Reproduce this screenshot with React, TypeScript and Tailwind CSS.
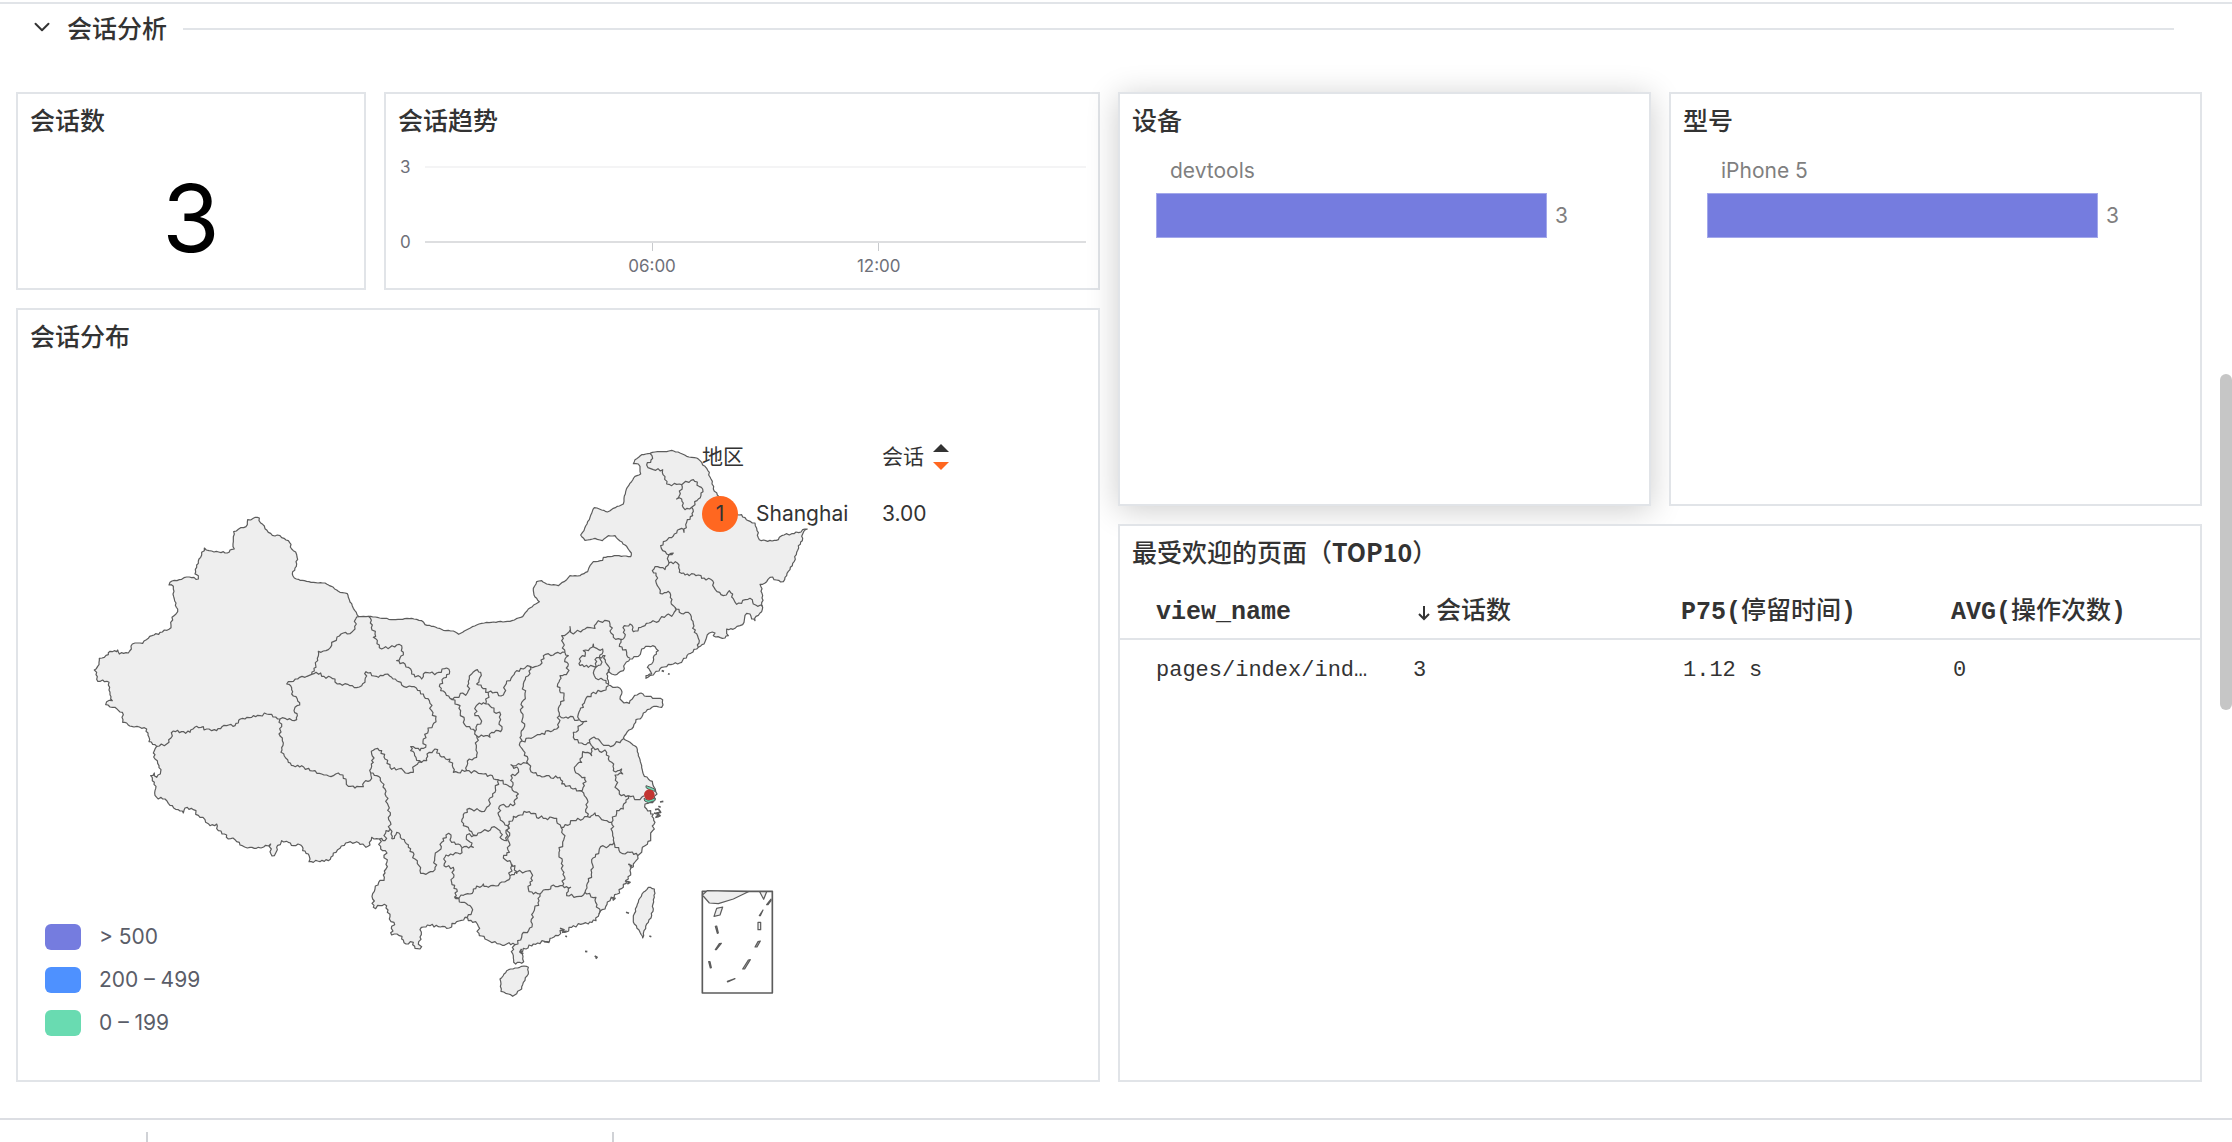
import React from "react";
import { ChevronDown } from "lucide-react";

type Point = [number, number];
type Sheet = "west" | "centre" | "north" | "inset";
type Line = { sheet: Sheet; rough: number; points: string };

/* The map is digitised on four sheets; each has its own origin. */
const ORIGINS: Record<Sheet, Point> = {
  west: [0, 0],
  centre: [840, 210],
  north: [1440, -210],
  inset: [1320, 450],
};

const OUTLINE: Line[] = [
  {
    sheet: "west",
    rough: 3,
    points:
      "290,772 267,758 260,720 245,718 215,712 200,702 188,700 187,670 165,655 137,647 140,638 157,635 150,610 147,580 128,573 113,577 110,550 103,543 113,532 118,508 145,497 150,487 170,488 173,483 178,495 205,492 217,465 248,463 265,448 300,430 333,416 336,385 348,375 353,360 343,330 340,292 327,288 330,280 365,271 388,264 415,270 415,260 405,255 410,235 422,205 433,177 455,186 490,188 502,192 510,183 523,180 520,150 521,128 535,121 558,113 563,92 580,88 598,87 602,102 625,130 645,141 660,140 685,155 695,180 710,197 709,232 698,248 703,267",
  },
  { sheet: "west", rough: 1, points: "703,267 720,274 760,280 795,282 820,295 840,310 862,314 865,325 880,358 896,383 925,382" },
  {
    sheet: "centre",
    rough: 1,
    points:
      "85,172 160,182 215,178 245,185 255,197 280,202 310,214 340,216 356,226 385,210 410,198 440,190 510,187 548,173 565,150 598,128 582,108 580,88 590,68 605,65 620,75 655,80 680,62 690,50 720,50 743,38 750,20 760,8 788,4",
  },
  {
    sheet: "north",
    rough: 1,
    points:
      "190,415 230,410 272,413 274,402 260,382 240,366 225,350 205,350 187,365 165,358 135,364 122,348 132,335 150,295 163,266 185,273 202,279 220,268 250,255 252,238 262,205 285,172 302,165 300,142 295,135 280,134 285,122 305,107 330,103 345,99 372,98 395,94 420,102 440,112 470,117 485,130",
  },
  {
    sheet: "north",
    rough: 3,
    points:
      "485,130 500,148 513,180 520,210 532,228 545,260 570,280 605,287 625,305 645,312 650,328 658,362 690,364 715,362 725,350 755,344 802,330 788,345 787,365 775,380 770,400 757,440 740,470 730,488 690,475 680,488 660,496 668,530 668,565 660,582 648,592 645,605 635,600 630,585 620,583 612,610 600,620 585,628 560,630 565,650 555,657 520,650 525,642 508,642 495,668 475,685 445,705 425,730 400,735 365,745 340,768 318,778 318,770 335,765 330,755 322,745 335,735 340,715 355,695 345,683 325,682 305,690 295,712 270,720 255,735 250,755 235,762 225,768 215,765 205,752 200,765 205,785 205,798 225,805 240,808 245,825 240,840 252,852 268,853 280,835 303,822 320,832 345,838 368,842 365,865 350,862 330,870 310,882 305,895 288,902 275,930 258,945 250,958",
  },
  { sheet: "north", rough: 1, points: "250,958 270,970 290,985" },
  { sheet: "centre", rough: 1, points: "890,565 895,590 905,620 910,645" },
  {
    sheet: "centre",
    rough: 5,
    points:
      "910,645 925,660 938,675 946,690 946,720 930,730 915,735 920,750 940,765 945,790 938,815 932,845 915,860 905,880 893,890 880,915 870,935 865,960 850,985 832,1005 810,1025 795,1050 777,1065 768,1085 745,1095 700,1100 672,1120 660,1115 655,1130 620,1148 580,1155 550,1168 540,1180 548,1200 545,1213 527,1215 520,1190 517,1165 525,1157 500,1155 480,1155 465,1148 435,1140 418,1130 412,1095 385,1085 375,1075 350,1088 320,1108 295,1103 270,1100 240,1112 240,1170 225,1168 220,1150 205,1155 185,1140 178,1130 155,1128 162,1090 148,1080 140,1040 100,1045 98,1020 105,990 133,955 138,930 136,875 122,870 118,840",
  },
  {
    sheet: "west",
    rough: 4,
    points:
      "958,1050 935,1045 930,1068 918,1075 890,1058 865,1060 840,1078 820,1092 805,1115 780,1118 747,1118 745,1095 728,1085 722,1068 700,1070 685,1060 665,1055 650,1075 643,1100 633,1095 632,1065 595,1075 570,1075 540,1068 525,1052 505,1050 500,1038 475,1025 470,1005 450,1010 435,992 420,985 400,962 375,957 370,972 355,962 325,943 315,930 290,925 285,905 283,880 272,860 283,852 290,865 301,855 297,830 285,810 283,785 290,772",
  },
];

const WEST_BORDERS = [
  "290,772 320,765 340,726 365,728 390,730 410,712 430,713 432,723 470,725 500,710 525,710 548,688 580,680 620,675 660,690",
  "660,690 675,688 710,692 712,680 702,665 705,655 719,648 712,630 695,615 692,590 680,585 685,578 755,556",
  "755,556 768,535 775,487 805,482 815,460 850,432 862,435 885,420 887,390 896,383",
  "660,690 657,700 665,705 657,735 667,755 663,790 685,820 700,830 725,830 750,845 800,858 820,860 835,852 858,870 865,892 885,897 910,893 912,880 930,875 932,852",
  "755,556 782,552 785,562 825,570 832,585 870,590 890,596 905,590 915,573 918,548 955,565 975,556 995,565 1010,575",
];

const CENTRE_BORDERS = [
  "170,365 185,378 215,383 250,405 268,425 275,455 287,480 265,515 250,540 257,565 240,575 212,563 212,575 228,595 245,610 225,620 220,640 205,643 190,635 175,630 150,625 135,600 125,575 105,570 95,585 100,610 92,642",
  "92,642 110,650 125,670 135,705 145,740 150,810 155,840",
  "150,810 138,815 135,845 118,840",
  "155,840 170,820 185,840 205,865 225,900 240,935 250,943 285,932 285,890 303,870 305,850 318,828 333,828 335,850 365,865",
  "85,172 105,225 100,235 125,270 150,265 185,260 190,280 170,305 205,325 215,345 245,360 250,345 290,342 320,327 328,345 300,375 302,395 330,418",
  "330,418 360,440 370,490 405,518 408,505 422,495 420,478 405,470 412,437 437,435",
  "330,418 382,402 388,360 405,335 422,340 410,375 425,385 445,400 437,435",
  "437,435 482,467 482,518 455,520 450,535 410,530",
  "405,518 410,530 410,595 388,600 380,635",
  "445,400 490,408 495,380 525,340 550,330 570,322",
  "570,322 565,350 550,375 555,410 545,430 550,510 540,550",
  "570,322 600,318 610,290 640,288 675,280",
  "675,280 665,245 665,230 680,225 690,203 700,225 735,210 765,208 775,185 800,185 810,195 820,235 850,240",
  "850,240 853,200 870,195 880,218 915,200 960,180 1000,165 1005,145",
  "850,240 838,262 860,280 870,298",
  "675,280 685,290 675,300 685,315 683,340 660,350 653,375 672,410 655,455 658,470",
  "540,550 600,527 650,510 658,470",
  "658,470 718,482",
  "805,380 790,395 760,400 735,425 730,445 715,465 718,482",
  "718,482 740,487 700,520 700,535 725,552 750,552",
  "750,552 755,538 775,540 785,553 820,560 850,540",
  "720,320 718,300 735,292 730,275 750,268 760,255 770,268 788,270 778,295 782,318 760,322 745,325 720,320",
  "778,295 795,290 800,315 806,335",
  "805,375 798,365 775,362 763,350 768,320 765,302 778,295",
  "750,552 760,565 800,580 815,610 820,635 845,630 848,645 825,648 833,670 825,685 838,705 865,710",
  "865,710 900,722 912,710",
  "760,565 755,590 728,578 720,600 725,610 703,625 715,645 735,655 733,680 718,695",
  "718,695 690,680 665,675 660,655 600,650 570,630 565,615",
  "540,550 550,575 565,615",
  "565,615 513,617 535,630 530,645 513,650 515,685",
  "380,635 430,645 475,662 515,685",
  "380,635 340,640 330,600 300,590 285,570 268,580 260,605 245,610",
  "475,662 465,700 440,745 425,758 388,748 370,775 370,800 395,818 410,830",
  "515,685 535,705 525,735 478,742 480,775 503,800",
  "410,830 455,805 480,815 485,840 500,845 505,800",
  "410,830 380,828 385,845 400,865 365,868",
  "365,868 360,885 318,888 312,920 340,925 335,970 350,990 343,1015",
  "343,1015 390,1005 400,990 430,975 445,985 475,980 500,965 510,950",
  "503,800 508,880 490,897 510,905 515,920 510,950",
  "515,915 525,920 530,945",
  "510,950 525,940 570,935 577,965 565,990 580,1005 600,1005",
  "600,1005 597,1025 580,1060 577,1095 545,1135 525,1157",
  "600,1005 605,1000 632,990 640,978 668,980",
  "668,980 672,940 657,880 675,830 663,805",
  "503,800 520,772 560,760 610,778 650,778 663,805",
  "663,805 700,785 742,773",
  "718,695 738,715 742,773",
  "742,773 765,762 780,775 815,790",
  "815,790 830,755 850,750 865,710",
  "815,790 822,850",
  "822,850 840,880 870,880 893,890",
  "822,850 778,870 755,910 755,940 735,1000",
  "668,980 692,985 680,1010 725,1012 735,1000",
  "735,1000 768,1015 777,1065",
  "343,1015 390,1040 395,1060 375,1075",
];

const NORTH_BORDERS = [
  "330,103 338,118 320,138 340,152 368,152 380,195 425,197 460,182 488,210 475,240 455,265 435,272 425,240 410,240 418,230 425,197",
  "455,265 458,290 440,310 432,340 425,328 362,380 380,405 400,402 385,412 387,432",
  "387,432 412,432 418,460 435,468 475,468 485,478 518,485 522,505 550,530 568,515 590,556 630,538 640,555 668,562",
  "387,432 375,452 345,443 337,455 348,462 352,500 360,523 385,517 400,560 405,565",
  "405,565 430,585 445,580 460,615 463,640 478,665 475,685",
];

const ISLANDS = [
  "545,1222 565,1225 565,1245 550,1270 545,1290 518,1312 483,1297 480,1260 500,1235 545,1222",
  "925,985 943,990 943,1015 935,1070 920,1095 908,1137 900,1120 883,1095 880,1070 895,1030 910,1000 925,985",
];

const ISLETS = [
  "858,1060 867,1063",
  "928,1131 934,1133",
  "735,1177 742,1178",
  "764,1191 771,1195 767,1199",
  "676,1131 681,1133",
  "965,335 972,337",
  "984,344 989,346",
  "960,729 970,727",
  "955,742 962,745",
  "945,752 955,750 962,760 950,762 960,770 948,775 955,765 942,762",
  "545,1170 540,1178 550,1184",
  "660,1108 672,1112 668,1120 680,1116",
  "865,915 875,920 870,925",
  "855,965 870,970 862,975",
  "812,1015 825,1018 818,1024",
  "612,1148 628,1150",
];

function parse(points: string): Point[] {
  return points.split(" ").map((pair) => pair.split(",").map(Number) as Point);
}

/* Splits long segments and nudges the new points sideways, as a surveyed border runs. */
function trace({ sheet, rough, points }: Line): Point[] {
  const [ox, oy] = ORIGINS[sheet];
  const base = parse(points).map(([x, y]): Point => [x + ox, y + oy]);
  const result: Point[] = [base[0]];
  for (let i = 1; i < base.length; i++) {
    const [ax, ay] = base[i - 1];
    const [bx, by] = base[i];
    const length = Math.hypot(bx - ax, by - ay) || 1;
    const steps = Math.max(1, Math.round(length / 7));
    for (let s = 1; s < steps; s++) {
      const t = s / steps;
      const wave = Math.sin((ax + bx) * 12.9 + (ay + by) * 78.2 + s * 37.7 + s * s * 1.7) * rough;
      result.push([
        Math.round(ax + (bx - ax) * t - ((by - ay) / length) * wave),
        Math.round(ay + (by - ay) * t + ((bx - ax) / length) * wave),
      ]);
    }
    result.push([bx, by]);
  }
  return result;
}

const toPath = (points: Point[]) => "M" + points.map((p) => p.join(" ")).join("L");

const outlinePath = toPath(OUTLINE.flatMap(trace)) + "Z";
const borderPath = [
  ...WEST_BORDERS.map((points) => toPath(trace({ sheet: "west", rough: 4, points }))),
  ...CENTRE_BORDERS.map((points) => toPath(trace({ sheet: "centre", rough: 5, points }))),
  ...NORTH_BORDERS.map((points) => toPath(trace({ sheet: "north", rough: 4, points }))),
].join("");
const islandPath = ISLANDS.map((points) => toPath(trace({ sheet: "centre", rough: 2, points })) + "Z").join("");
const isletPath = ISLETS.map((points) => toPath(trace({ sheet: "centre", rough: 0, points }))).join("");

function ChinaMap() {
  return (
    <svg
      className="mt-[91px] ml-[72px] h-[555px] w-[720px] shrink-0"
      viewBox="90 -135 2160 1665"
      fill="#eeeeee"
      stroke="#5c5c5c"
      strokeWidth="3.6"
      strokeLinejoin="round"
      role="img"
      aria-label="会话分布"
    >
      <path d={outlinePath} />
      <path d={borderPath} fill="none" />
      <path d={islandPath} />
      <path d={isletPath} fill="none" strokeWidth="5" />
      <g transform="translate(840 210)">
        <path
          d="M918 680L930 684L944 690L945 697L930 693L918 686ZM912 718L925 724L945 717L945 725L925 731L914 726Z"
          fill="#69dbb1"
          strokeWidth="3"
        />
        <circle cx="928" cy="707" r="16" fill="#c23531" stroke="none" />
      </g>
      <g transform="translate(1320 450)">
        <rect x="607" y="757" width="210" height="305" fill="none" strokeWidth="5" />
        <path d="M607 768L622 755L745 758L700 780L655 794L628 792Z" />
        <path d="M779 758L791 781L800 758Z" />
        <path d="M650 808L668 804L660 828L642 832Z" />
        <path d="M774 850H782V872H774Z" />
        <path
          d="M813 780L800 797L804 797L813 785ZM789 813L778 830L781 830ZM646 862L650 861L655 882L652 883ZM664 913L658 914L646 932L649 932ZM781 906L774 908L765 924L771 924ZM751 962L745 963L728 990L734 990ZM626 968L630 968L634 986L631 987ZM705 1019L682 1027L683 1029Z"
          fill="#aaaaaa"
        />
      </g>
    </svg>
  );
}

function Card({
  title,
  className = "",
  children,
}: {
  title: React.ReactNode;
  className?: string;
  children: React.ReactNode;
}) {
  return (
    <section className={`flex flex-col border-2 border-[#e1e4e8] bg-white ${className}`}>
      <h3 className="px-3 pt-[7px] text-[25px] leading-9 font-medium">{title}</h3>
      {children}
    </section>
  );
}

function TrendChart() {
  return (
    <div className="mt-[19px] flex pr-3 pl-3.5 font-[Inter,'Liberation_Sans',sans-serif] text-[17px] leading-[22px] text-[#6e7079]">
      <div className="flex w-[25px] flex-col justify-between pb-6">
        <span>3</span>
        <span>0</span>
      </div>
      <div className="flex flex-1 flex-col pt-2.5">
        <div className="h-[77px] border-t-2 border-b-2 border-t-[#f4f4f5] border-b-[#dddee0]" />
        <div className="flex">
          <div className="w-[17.2%]" />
          {["06:00", "12:00"].map((label) => (
            <div key={label} className="flex w-[34.3%] flex-col items-center">
              <span className="h-2 w-px bg-[#c8cacd]" />
              <span className="mt-1">{label}</span>
            </div>
          ))}
        </div>
      </div>
    </div>
  );
}

function BarCard({ title, name, value, className = "" }: { title: string; name: string; value: number; className?: string }) {
  return (
    <Card title={title} className={className}>
      <div className="mt-5 pl-9 font-[Inter,'Liberation_Sans',sans-serif] text-[21px] leading-7 text-[#7f7f7f]">
        <div className="pl-3.5">{name}</div>
        <div className="mt-2 flex items-center gap-2">
          <div className="h-[45px] w-[79.3%] border border-[#a3a8ea] bg-[#757cdf]" />
          <span>{value}</span>
        </div>
      </div>
    </Card>
  );
}

const LEGEND = [
  { label: "> 500", swatch: "bg-[#757cdf]" },
  { label: "200 – 499", swatch: "bg-[#4e91ff]" },
  { label: "0 – 199", swatch: "bg-[#69dbb1]" },
];

function DistributionCard() {
  return (
    <Card title="会话分布" className="relative h-[774px]">
      <ChinaMap />
      <table className="absolute top-[124px] left-[684px] text-left font-[Inter,'Noto_Sans_CJK_SC',sans-serif] text-[21px] text-[#333333]">
        <thead>
          <tr className="h-[46px]">
            <th className="w-[180px] p-0 font-normal">地区</th>
            <th className="p-0 font-normal">
              <button type="button" className="flex items-center gap-[9px]">
                会话
                <svg className="h-[26px] w-4" viewBox="0 0 16 26" aria-hidden="true">
                  <path d="M8 0L16 8H0Z" fill="#333333" />
                  <path d="M0 18H16L8 26Z" fill="#ff6720" />
                </svg>
              </button>
            </th>
          </tr>
        </thead>
        <tbody>
          <tr className="h-[68px]">
            <td className="p-0">
              <span className="flex items-center gap-[18px]">
                <span className="flex size-9 items-center justify-center rounded-full bg-[#ff6720]">1</span>
                Shanghai
              </span>
            </td>
            <td className="p-0">3.00</td>
          </tr>
        </tbody>
      </table>
      <ul className="absolute bottom-11 left-[27px] flex flex-col gap-[17px] font-[Inter,'Liberation_Sans',sans-serif] text-[21px] leading-[26px] text-[#5a5d68]">
        {LEGEND.map(({ label, swatch }) => (
          <li key={label} className="flex items-center gap-[18px]">
            <span className={`h-[26px] w-9 rounded-md ${swatch}`} />
            {label}
          </li>
        ))}
      </ul>
    </Card>
  );
}

function PagesTable() {
  return (
    <table className="mt-2 w-full table-fixed border-collapse text-left font-['Liberation_Mono','Noto_Sans_CJK_SC',monospace]">
      <thead>
        <tr className="h-[62px] border-b-2 border-[#e1e4e8] text-[25px]">
          <th className="pt-2.5 pr-5 pb-0 pl-9 font-bold">view_name</th>
          <th className="px-5 pt-2.5 pb-0 font-medium">
            <button type="button" className="flex items-center gap-1.5 pl-2">
              <svg className="h-4 w-3" viewBox="0 0 12 16" fill="none" stroke="#333333" strokeWidth="2" aria-hidden="true">
                <path d="M6 1V14M1 9L6 14L11 9" />
              </svg>
              会话数
            </button>
          </th>
          <th className="px-[21px] pt-2.5 pb-0 font-bold">
            P75(<span className="font-medium">停留时间</span>)
          </th>
          <th className="px-[21px] pt-2.5 pb-0 font-bold">
            AVG(<span className="font-medium">操作次数</span>)
          </th>
        </tr>
      </thead>
      <tbody>
        <tr className="h-[62px] text-[22px]">
          <td className="truncate pr-5 pl-9">pages/index/index</td>
          <td className="px-[23px]">3</td>
          <td className="px-[23px]">1.12 s</td>
          <td className="px-[23px]">0</td>
        </tr>
      </tbody>
    </table>
  );
}

export default function App() {
  return (
    <main className="relative flex min-h-screen flex-col overflow-hidden bg-white font-['Noto_Sans_CJK_SC',sans-serif] text-[#333333]">
      <div className="mt-0.5 h-0.5 bg-[#e1e4e8]" />
      <header className="mt-1.5 mr-[58px] flex items-center pl-[29px]">
        <button type="button" className="flex items-center gap-3 pb-1 text-[25px] leading-[34px] font-medium">
          <ChevronDown size={26} strokeWidth={1.8} aria-hidden="true" />
          会话分析
        </button>
        <div className="ml-4 h-0.5 flex-1 bg-[#e1e4e8]" />
      </header>

      <div className="mt-11 mr-[30px] ml-4 grid grid-cols-2 gap-[18px]">
        <div className="flex flex-col gap-[18px]">
          <div className="grid h-[198px] grid-cols-[350fr_716fr] gap-[18px]">
            <Card title="会话数">
              <div className="flex flex-1 items-center justify-center pt-3 font-[Inter,'Liberation_Sans',sans-serif] text-[93px] leading-none text-black">
                3
              </div>
            </Card>
            <Card title="会话趋势">
              <TrendChart />
            </Card>
          </div>
          <DistributionCard />
        </div>
        <div className="flex flex-col gap-[18px]">
          <div className="grid h-[414px] grid-cols-2 gap-[18px]">
            <BarCard title="设备" name="devtools" value={3} className="shadow-[0_4px_30px_rgba(0,0,0,0.2)]" />
            <BarCard title="型号" name="iPhone 5" value={3} />
          </div>
          <Card
            title={
              <>
                最受欢迎的页面（<span className="font-bold">TOP10</span>）
              </>
            }
            className="flex-1"
          >
            <PagesTable />
          </Card>
        </div>
      </div>

      <footer className="mt-9 flex border-t-2 border-[#dcdee3] pt-3">
        <div className="ml-[146px] h-2.5 w-[468px] border-x-2 border-[#d0d2d6]" />
      </footer>

      <div className="absolute top-[374px] right-0 h-[336px] w-3 rounded-md bg-[#c6c6c6]" />
    </main>
  );
}
